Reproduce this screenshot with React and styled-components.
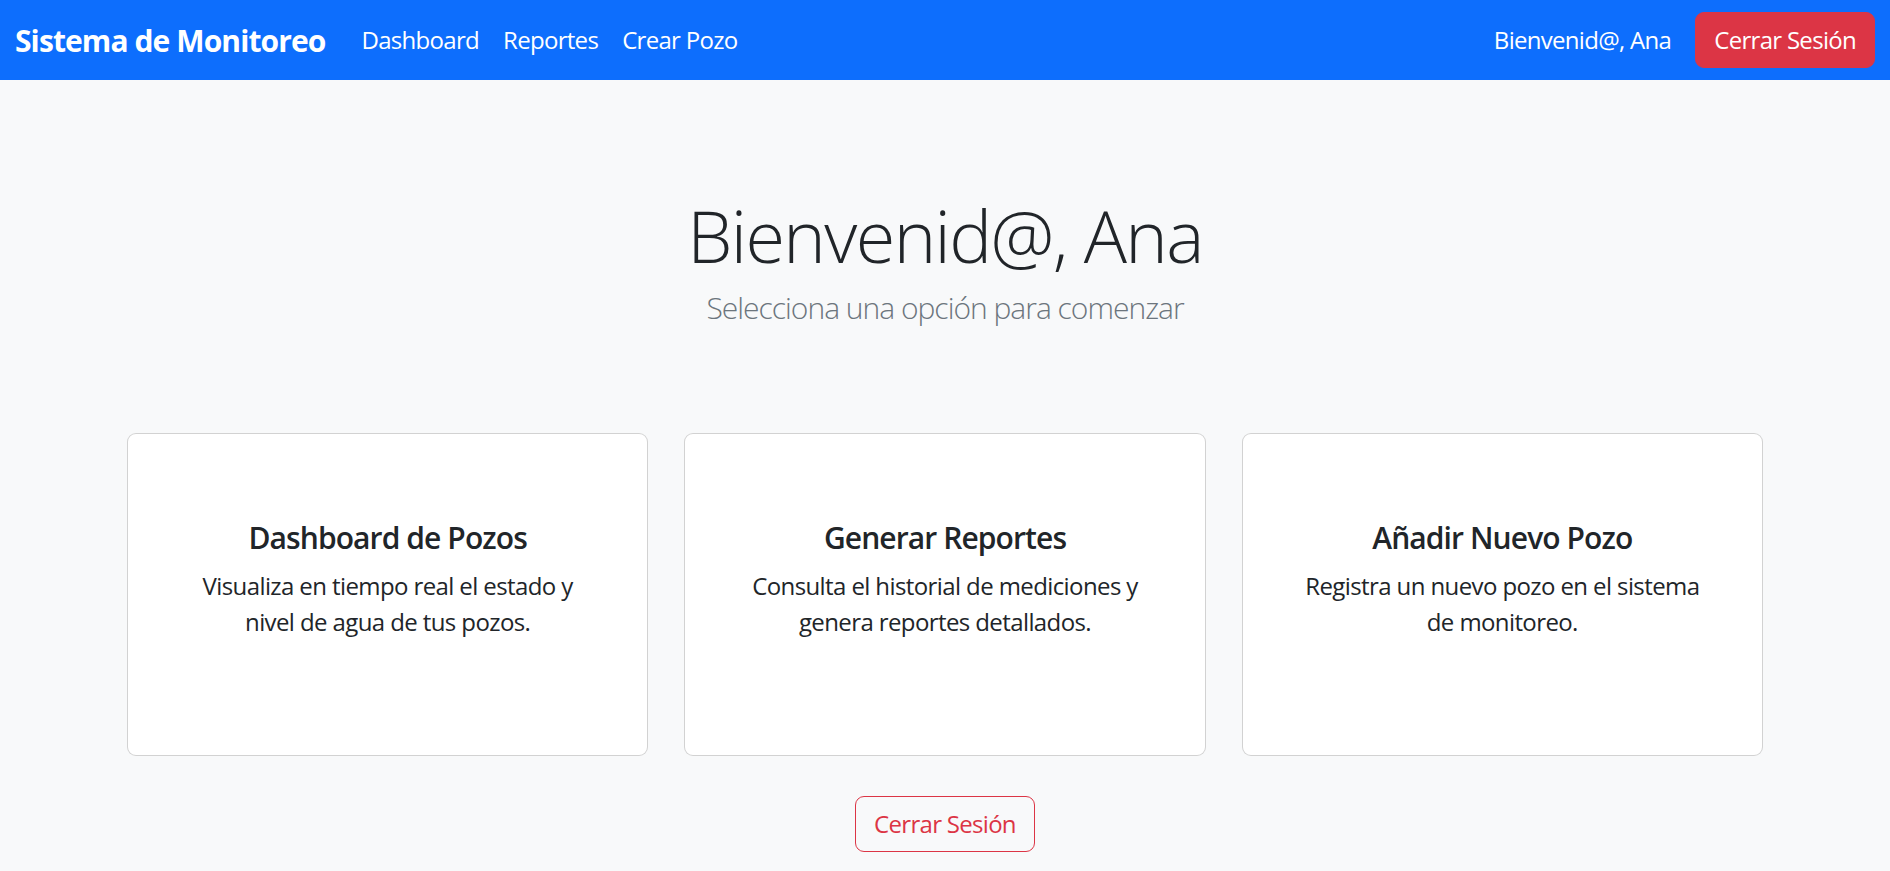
import React from 'react'
import styled, { createGlobalStyle } from 'styled-components'

const GlobalStyle = createGlobalStyle`
  * { box-sizing: border-box; }
  body {
    margin: 0;
    background: #f8f9fa;
    color: #212529;
    font-family: "Open Sans", "Liberation Sans", sans-serif;
    font-size: 24px;
    line-height: 1.5;
    letter-spacing: -0.7px;
  }
`

const Navbar = styled.nav`
  height: 80px;
  background: #0d6efd;
  display: flex;
  align-items: center;
  justify-content: space-between;
  padding: 0 15px;
`
const NavLeft = styled.div`
  display: flex;
  align-items: center;
`
const Brand = styled.a`
  color: #fff;
  font-size: 30px;
  font-weight: 700;
  line-height: 1.5;
  margin-right: 24px;
  text-decoration: none;
  letter-spacing: -0.9px;
`
const NavLink = styled.a`
  color: #fff;
  font-size: 24px;
  padding: 0 12px;
  text-decoration: none;
`
const NavRight = styled.div`
  display: flex;
  align-items: center;
`
const NavText = styled.span`
  color: #fff;
  margin-right: 24px;
`
const Button = styled.button`
  font-family: inherit;
  font-size: 24px;
  letter-spacing: inherit;
  line-height: 36px;
  padding: 9px 18px;
  border-radius: 9px;
  cursor: pointer;
  border: 1px solid #dc3545;
  background: ${({ outline }) => (outline ? 'transparent' : '#dc3545')};
  color: ${({ outline }) => (outline ? '#dc3545' : '#fff')};
`

const Main = styled.main`
  display: flex;
  flex-direction: column;
  align-items: center;
  padding-top: 112px;
`
const Title = styled.h1`
  margin: 0 0 7px;
  font-size: 72px;
  font-weight: 300;
  line-height: 1.2;
  letter-spacing: -1.6px;
`
const Lead = styled.p`
  margin: 0 0 103px;
  font-size: 30px;
  font-weight: 300;
  color: #6c757d;
  letter-spacing: -1px;
`
const CardGrid = styled.div`
  width: 1636px;
  display: grid;
  grid-template-columns: repeat(3, 1fr);
  gap: 36px;
  margin-bottom: 40px;
`
const Card = styled.div`
  background: #fff;
  border: 1px solid rgba(0, 0, 0, 0.175);
  border-radius: 9px;
  padding: 86px 48px 115px;
  text-align: center;
`
const CardTitle = styled.h5`
  margin: 0 0 12px;
  font-size: 30px;
  font-weight: 600;
  line-height: 1.2;
  letter-spacing: -0.9px;
`
const CardText = styled.p`
  margin: 0 auto;
  max-width: 420px;
  letter-spacing: -0.6px;
`

const cards = [
  {
    title: 'Dashboard de Pozos',
    text: 'Visualiza en tiempo real el estado y nivel de agua de tus pozos.',
  },
  {
    title: 'Generar Reportes',
    text: 'Consulta el historial de mediciones y genera reportes detallados.',
  },
  {
    title: 'Añadir Nuevo Pozo',
    text: 'Registra un nuevo pozo en el sistema de monitoreo.',
  },
]

export default function App() {
  return (
    <>
      <GlobalStyle />
      <Navbar>
        <NavLeft>
          <Brand href="#">Sistema de Monitoreo</Brand>
          <NavLink href="#">Dashboard</NavLink>
          <NavLink href="#">Reportes</NavLink>
          <NavLink href="#">Crear Pozo</NavLink>
        </NavLeft>
        <NavRight>
          <NavText>Bienvenid@, Ana</NavText>
          <Button>Cerrar Sesión</Button>
        </NavRight>
      </Navbar>
      <Main>
        <Title>Bienvenid@, Ana</Title>
        <Lead>Selecciona una opción para comenzar</Lead>
        <CardGrid>
          {cards.map((c) => (
            <Card key={c.title}>
              <CardTitle>{c.title}</CardTitle>
              <CardText>{c.text}</CardText>
            </Card>
          ))}
        </CardGrid>
        <Button outline>Cerrar Sesión</Button>
      </Main>
    </>
  )
}
